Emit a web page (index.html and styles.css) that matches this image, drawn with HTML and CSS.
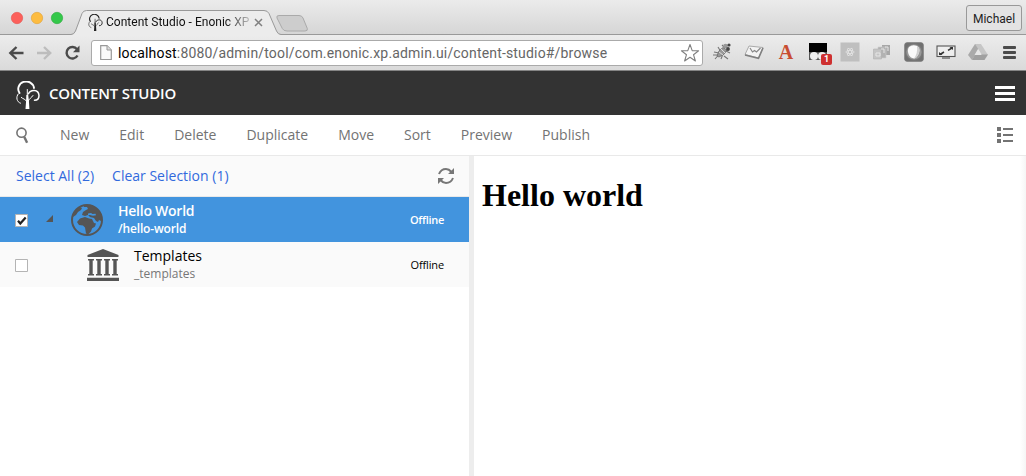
FILE: index.html
```html
<!DOCTYPE html>
<html lang="en">
<head>
<meta charset="utf-8">
<title>Content Studio - Enonic XP</title>
<link rel="stylesheet" href="styles.css">
</head>
<body>
<svg class="defs" width="0" height="0"><defs>
<symbol id="tree" viewBox="0 0 24 28">
<g fill="none" stroke="currentColor" stroke-linecap="round">
<path d="M3.500 12A7.900 7.500 0 1 1 18 7" stroke-width="1.9"/>
<path d="M2.200 13C-.3 16 .6 21 4.500 22.200" stroke-width="1"/>
<path d="M12.500 12.800C14.500 8.500 22.500 8 23 14.500C23 17.500 21 19.300 18.500 19.300" stroke-width="1.5"/>
<path d="M11.300 17V8.500M10.800 20.500C9.500 18 7 18 5.300 16.500M12 20.500C13 17.500 15.500 17 17 14.500" stroke-width="1"/>
</g><path d="M10.400 14h1.800l.7 6 .5 8H9.500l.6-8z" fill="currentColor"/>
</symbol></defs></svg>
<div class="browser">
  <div class="tabstrip">
    <svg class="strip-art" width="320" height="36" viewBox="0 0 320 36">
      <circle cx="17" cy="18" r="5.7" fill="#fc605b" stroke="#e2524d" stroke-width=".6"/>
      <circle cx="37" cy="18" r="5.7" fill="#fdbc40" stroke="#df9f34" stroke-width=".6"/>
      <circle cx="57" cy="18" r="5.7" fill="#34c84a" stroke="#2aa83b" stroke-width=".6"/>
      <path d="M0 34.5H71Q74 34.5 75.5 31L82 13.5Q83.2 10.5 86.5 10.5H264Q267.5 10.5 269 13.5L276.5 31Q278 34.5 281 34.5H320V36H0z" fill="#ececec"/>
      <path d="M0 34.5H71Q74 34.5 75.5 31L82 13.5Q83.2 10.5 86.5 10.5H264Q267.5 10.5 269 13.5L276.5 31Q278 34.5 281 34.5H320" fill="none" stroke="#999"/>
      <path d="M279 15.5H299Q302 15.5 303 18L307.3 28.5Q308 31 305 31H287Q283.5 31 282.3 28.5L277 18Q276 15.5 279 15.5z" fill="#cdcdcd" stroke="#aaa"/>
    </svg>
    <div class="tab"><svg class="favicon"><use href="#tree"/></svg><span class="tab-title">Content Studio - Enonic XP</span>
      <svg class="tab-close" width="9" height="9" viewBox="0 0 9 9"><path d="M1 1l7 7M8 1L1 8" stroke="#808080" stroke-width="1.5"/></svg></div>
    <div class="profile">Michael</div>
  </div>
  <div class="navbar">
    <svg class="nav" width="80" height="24" viewBox="0 0 80 24" fill="none" stroke-width="2.4">
      <path d="M1.8 12H15.5M8.5 6L2.3 12l6.2 6" stroke="#4b4b4b"/>
      <path d="M29 12H42.8M36 6l6.2 6-6.2 6" stroke="#bdbdbd"/>
      <path d="M69 8.2A5.8 5.8 0 1 0 69.5 14.5" stroke="#4b4b4b"/><path d="M71.5 4.5V11.2H65z" fill="#4b4b4b"/>
    </svg>
    <div class="address">
      <svg width="12" height="16" viewBox="0 0 12 16"><path d="M.7.7H7L11.3 5V14.5H.7z" fill="#fafafa" stroke="#999" stroke-width="1.2"/><path d="M7 .7V5h4.3" fill="#ddd" stroke="#999"/></svg>
      <span class="url"><b>localhost</b>:8080/admin/tool/com.enonic.xp.admin.ui/content-studio#/browse</span>
      <svg class="star" width="20" height="20" viewBox="0 0 20 20"><path d="M10 1.5l2.2 6.1 6.4.2-5.1 3.9 1.9 6.3L10 14.3 4.6 18l1.9-6.3-5.1-3.9 6.4-.2z" fill="#fff" stroke="#808080" stroke-width="1.1" stroke-linejoin="round"/></svg>
    </div>
    <div class="extensions">
      <svg width="20" height="20" viewBox="0 0 20 20"><path d="M3 17L10 9M2 10l5 1M6 5l3 5M9 17l2-5M12 14l4 3M14 9l4 2M10 3l3 3M1 13l5 0" stroke="#777" stroke-width="1.1"/><path d="M5 14Q6 8 11 5.5L15 8Q13 13 7 15z" fill="#999" stroke="#666" stroke-width=".7"/><path d="M7 10l4 3M9 7l4 4" stroke="#ddd"/><circle cx="13.5" cy="4" r="2.3" fill="#999"/><circle cx="17" cy="3" r="1.6" fill="#444"/><circle cx="16" cy="7" r="1.9" fill="#444"/></svg>
      <svg width="20" height="20" viewBox="0 0 20 20"><path d="M5 4L19 5.5 14.5 16 1 12.5z" fill="#f3f3f3" stroke="#aaa"/><path d="M1 13l13.5 3.2L19 6" fill="none" stroke="#808080" stroke-width="1.6"/><path d="M6 6l2.500 4 2-1.500 2 1.500L16.500 6" fill="none" stroke="#888" stroke-width="1.2"/></svg>
      <span class="letter">A</span>
      <span class="script-blocker"><svg width="20" height="20" viewBox="0 0 20 20"><path d="M1 1h18v17H1z" fill="#555"/><path d="M1 1h18v9H1z"/><circle cx="6" cy="14" r="4" fill="#eee"/><circle cx="14" cy="14" r="4" fill="#eee"/></svg><span class="badge">1</span></span>
      <svg width="20" height="20" viewBox="0 0 20 20"><path d="M.5.5h19v19H.5z" fill="#bfbfbf"/><g fill="none" stroke="#e4e4e4" stroke-width=".8"><ellipse cx="10" cy="10" rx="4.2" ry="1.6"/><ellipse cx="10" cy="10" rx="4.2" ry="1.6" transform="rotate(60 10 10)"/><ellipse cx="10" cy="10" rx="4.2" ry="1.6" transform="rotate(120 10 10)"/></g></svg>
      <svg width="20" height="20" viewBox="0 0 20 20"><path d="M10 3h8v10h-8z" fill="#a7a7a7"/><path d="M6 5h8v11H6z" fill="#b2b2b2" stroke="#ccc" stroke-width=".6"/><path d="M1.5 7h8v10h-8z" fill="#c5c5c5" stroke="#aaa" stroke-width=".5"/><path d="M4 11h4v3H4zM9 7h3v4M13 5h3v4" fill="none" stroke="#e6e6e6"/></svg>
      <svg width="20" height="20" viewBox="0 0 20 20"><defs><radialGradient id="moon"><stop stop-color="#aaa"/><stop offset="1" stop-color="#707070"/></radialGradient></defs><rect x=".8" y=".8" width="18.4" height="18.4" rx="2" fill="url(#moon)" stroke="#777"/><circle cx="10" cy="10" r="7.6" fill="#999"/><path d="M5 5Q8.500 2 13 4Q16.500 6 15 11Q13 16 10 16.500Q6 16 4.500 12Q3 8 5 5" fill="#fafafa"/><path d="M13 4Q16.500 6 15 11Q13 16 10 16.500Q14 11 13 4" fill="#d0d0d0"/></svg>
      <svg width="20" height="20" viewBox="0 0 20 20"><rect x="1" y="4" width="18" height="10.5" fill="#eee" stroke="#555" stroke-width="1.1"/><path d="M6 16h8" stroke="#777" stroke-width="1.6"/><path d="M4 12.500l4-2.500M12 8.300L16 6" stroke="#333" stroke-width="1.5"/><path d="M3 13V10l3.500 3zM17 5v3L13.500 5z" fill="#333"/></svg>
      <svg width="20" height="20" viewBox="0 0 20 20"><path d="M7 2L13 2 10 8 4 18 0 13z" fill="#aaa"/><path d="M7 2h6l7 11h-6z" fill="#c6c6c6"/><path d="M7 12.5h13L16.5 18H4z" fill="#a0a0a0"/><path d="M10 7l3.5 6h-7z" fill="#e6e6e6"/></svg>
      <svg class="chrome-menu" width="13" height="15" viewBox="0 0 13 15"><path d="M1 2.5h11M1 7.5h11M1 12.5h11" stroke="#4b4b4b" stroke-width="2.8" stroke-linecap="round"/></svg>
    </div>
  </div>
</div>
<header class="app-header"><svg class="logo" width="24" height="28"><use href="#tree"/></svg><span>CONTENT STUDIO</span><svg class="menu" width="20" height="16"><path d="M0 0h20v3H0zM0 6h20v3H0zM0 12h20v3H0z" fill="#fff"/></svg></header>
<nav class="toolbar">
  <svg class="search" width="14" height="17" viewBox="0 0 14 17" fill="none" stroke="#737373"><circle cx="5.500" cy="5.7" r="4.6" stroke-width="1.6"/><path d="M8.3 10l2.8 5.8" stroke-width="2.4"/></svg>
  <div class="actions"><span>New</span><span>Edit</span><span>Delete</span><span>Duplicate</span><span>Move</span><span>Sort</span><span>Preview</span><span>Publish</span></div>
  <svg class="list" width="16" height="16"><path d="M0 0h4v4H0zM0 6h4v4H0zM0 12h4v4H0zM6 1h10v2H6zM6 7h10v2H6zM6 13h10v2H6z" fill="#737373"/></svg>
</nav>
<main class="workspace">
  <section class="tree-panel">
    <div class="selection"><a class="select-all">Select All (2)</a><a>Clear Selection (1)</a>
      <svg class="refresh" width="18" height="18" viewBox="0 0 18 18"><g fill="none" stroke="#777" stroke-width="2"><path d="M2 7Q4 2 9 2Q12 2 14.5 5"/><path d="M16 11Q14 16 9 16Q6 16 3.5 13"/></g><path d="M17 1v6h-6zM1 17v-6h6z" fill="#777"/></svg></div>
    <div class="row selected">
      <svg class="check" width="13" height="13"><path d="M.5.5h12v12H.5z" fill="#fff" stroke="#b4b4b4"/><path d="M3 6.8l2.3 2.7L10.7 3.5" fill="none" stroke="#222" stroke-width="2.2"/></svg>
      <svg class="expander" width="7" height="7"><path d="M7 0v7H0z" fill="#555"/></svg>
      <svg class="globe" width="32" height="32" viewBox="0 0 32 32"><circle cx="16" cy="16" r="15" fill="none" stroke="#555" stroke-width="2"/><path d="M2 10Q5 5 9 3l2 1-1 2-3 2-2 3-3 2zM13 1h7Q29 4 31 14l-1 3-2-1-1 2-2-1-2-3-4-1-2-2-3 1-3-1 1-3 3-2 2-1-1-2-3 0zM9 14.500l5-1.500 4 1.500 3 .5 2 4 2 .5-1 3-3 2-1 3-3 3-2-1-1-6-2-2-4-.5-2-3z" fill="#555"/><path d="M17 9.500l3-.5 1.500 1 3-.3.500 1.500-3 .5-3-.7-2 .3z" fill="#4294de"/></svg>
      <div class="names"><strong>Hello World</strong><span>/hello-world</span></div><span class="status">Offline</span>
    </div>
    <div class="row child">
      <svg class="check" width="13" height="13"><path d="M.5.5h12v12H.5z" fill="#fff" stroke="#b4b4b4"/></svg>
      <svg class="temple" width="32" height="32" viewBox="0 0 32 32" fill="#555"><path d="M16 0L31.500 6v2H.5V6zM1 10h6v1.500H5.700v13.500H7v1.500H1V25h1.300V11.500H1zM9 10h6v1.500h-1.300v13.500H15v1.500H9V25h1.300V11.500H9zM17 10h6v1.500h-1.300v13.500H23v1.500h-6V25h1.300V11.500H17zM25 10h6v1.500h-1.300v13.500H31v1.500h-6V25h1.300V11.500H25zM0 28.700h32V32H0z"/></svg>
      <div class="names"><strong>Templates</strong><span>_templates</span></div><span class="status">Offline</span>
    </div>
  </section>
  <div class="splitter"></div>
  <article class="content"><h1>Hello world</h1></article>
</main>
</body>
</html>
```

FILE: styles.css
```css
* { box-sizing: border-box; }
body { margin: 0; width: 1026px; height: 476px; overflow: hidden; background: #fff; font-family: "Open Sans", sans-serif; }
svg { display: block; flex: none; }
.defs { position: absolute; }
.browser { height: 71px; font-family: Roboto, sans-serif; border-bottom: 1px solid #858585; }
.tabstrip { position: relative; height: 35px; display: flex; align-items: flex-start; justify-content: space-between; background: linear-gradient(#ebebeb, #d6d6d6); border-bottom: 1px solid #999; }
.strip-art { position: absolute; left: 0; top: 0; }
.tab { position: relative; display: flex; align-items: center; padding: 14px 0 0 88px; }
.favicon { width: 15px; height: 17px; color: #222; }
.tab-title { width: 147px; margin-left: 3px; white-space: nowrap; font-size: 12px; line-height: 17px; letter-spacing: .02px; color: #111; -webkit-mask-image: linear-gradient(90deg, #000 119px, transparent 150px); mask-image: linear-gradient(90deg, #000 119px, transparent 150px); }
.tab-close { margin-left: 1px; }
.profile { width: 56px; height: 26px; margin: 5px 4px 0 0; border: 1px solid #999; border-radius: 3px; background: #e3e3e3; font-size: 12px; line-height: 26px; text-align: center; color: #222; }
.navbar { position: relative; height: 35px; display: flex; align-items: center; padding-left: 8px; background: linear-gradient(#ececec, #dadada); }
.nav { margin-right: 3px; }
.address { width: 612px; height: 26px; display: flex; align-items: center; padding: 0 2px 0 8px; border: 1px solid #aaa; border-radius: 3px; background: #fff; }
.url { margin-left: 6px; font-size: 14px; line-height: 20px; letter-spacing: .175px; color: #666; white-space: nowrap; }
.url b { font-weight: 400; color: #000; }
.star { margin-left: auto; }
.extensions { display: flex; align-items: center; gap: 12px; margin: -1px 0 0 9px; }
.letter { width: 20px; text-align: center; font: bold 20px/20px "Liberation Serif", serif; color: #c84d32; }
.script-blocker { position: relative; }
.badge { position: absolute; left: 13px; top: 12px; width: 11px; height: 11px; border-radius: 2px; background: #ce3030; color: #fff; font-size: 9px; line-height: 11px; text-align: center; font-weight: 700; }
.chrome-menu { margin-left: 3px; }
.app-header { height: 44px; display: flex; align-items: center; padding: 0 11px 0 16px; background: #333; color: #fff; font-size: 15px; font-weight: 600; }
.app-header span { margin-left: 9px; letter-spacing: -.15px; }
.logo { margin-top: 3px; }
.menu { margin: 1px 0 0 auto; }
.toolbar { height: 41px; display: flex; align-items: center; padding: 0 13px 0 16px; border-bottom: 1px solid #e9e9e9; font-size: 14px; line-height: 19px; color: #737373; }
.actions { display: flex; gap: 30px; margin-left: 30px; padding-bottom: 2px; }
.list { margin: -1px 0 0 auto; }
.workspace { height: 320px; display: flex; }
.tree-panel { width: 469px; }
.selection { height: 41px; display: flex; align-items: center; padding: 0 14px 0 16px; background: #fafafa; border-bottom: 1px solid #e9e9e9; font-size: 14px; line-height: 19px; color: #3169dd; }
.selection a { padding-bottom: 2px; }
.select-all { margin-right: 18px; }
.refresh { margin-left: auto; }
.row { height: 45px; display: flex; align-items: center; padding: 0 25px 0 15px; background: #fafafa; }
.selected { background: #4294de; color: #fff; }
.check { margin-top: 2px; }
.expander { margin: -3px 0 0 18px; }
.globe { margin-left: 18px; }
.temple { margin: 1px 0 0 59px; }
.names { display: flex; flex-direction: column; margin-left: 15px; }
.names strong { font-size: 14px; line-height: 18px; font-weight: 400; }
.names span { font-size: 12px; line-height: 17px; color: #777; }
.selected strong { font-weight: 600; letter-spacing: -.25px; }
.selected .names span { color: #fff; font-weight: 600; letter-spacing: -.16px; }
.status { margin-left: auto; font-size: 11px; letter-spacing: -.15px; }
.selected .status { font-weight: 600; letter-spacing: -.3px; }
.splitter { width: 5px; background: #ededed; }
.content { flex: 1; padding: 21px 8px; background: linear-gradient(90deg, transparent 546px, #f5f5f5 552px); }
.content h1 { margin: 0; font: bold 32px/37px "Liberation Serif", serif; color: #000; }
```
